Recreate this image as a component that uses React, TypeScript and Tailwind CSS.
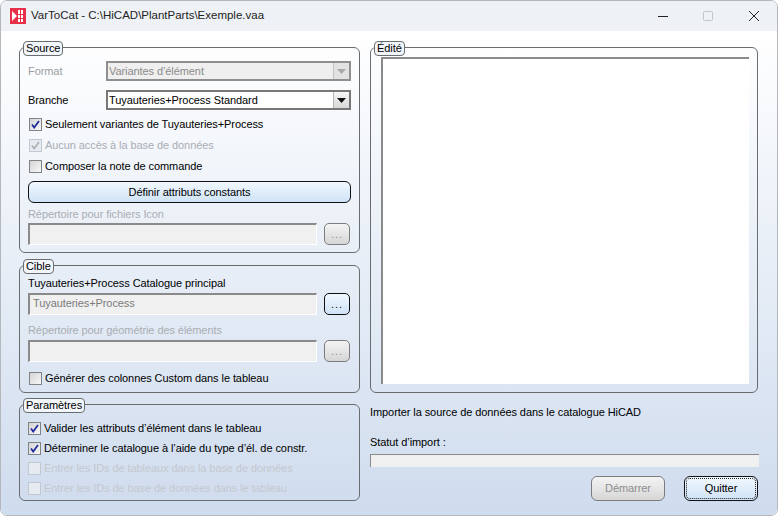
import React from "react";

const F = "font-['Liberation_Sans',sans-serif]";

function Check({ checked, disabled, label, dim }: { checked?: boolean; disabled?: boolean; label: string; dim?: boolean }) {
  return (
    <div className="flex h-[14px] items-center gap-[3px]">
      <span className={`flex h-[13px] w-[13px] shrink-0 items-center justify-center border ${disabled ? "border-[#c2c8d0] bg-[#e6ebf2]" : "border-[#7f8286] bg-gradient-to-br from-[#d4d4d4] to-[#f8f8f8]"}`}>
        {checked && (
          <svg width="9" height="9" viewBox="0 0 9 9" fill="none">
            <path d="M1 4.5 L3.2 7.6 L8 1" stroke={disabled ? "#b0b0b0" : "#1c2a9c"} strokeWidth="1.7" />
          </svg>
        )}
      </span>
      <span className={`whitespace-nowrap text-[11px] leading-[14px] ${disabled ? (dim ? "text-[#c4c8ce]" : "text-[#a9adb3]") : "text-[#000]"}`}>{label}</span>
    </div>
  );
}

function Field({ text }: { text?: string }) {
  return (
    <div className="h-[22px] w-[289px] border-t-2 border-l-2 border-r border-b border-t-[#8a8a8a] border-l-[#8a8a8a] border-r-white border-b-white bg-[#f0f0f0] pl-[3px] text-[11px] leading-[17px] text-[#7b7b7b]">
      {text}
    </div>
  );
}

function Dots({ active }: { active?: boolean }) {
  return (
    <div className={`flex h-[22px] w-[26px] items-center justify-center rounded-[5px] border text-[11px] leading-[18px] tracking-[1px] ${active ? "border-[#111] bg-gradient-to-b from-[#f2f8fe] to-[#cfe3f7] text-[#111]" : "border-[#7c7c7c] bg-gradient-to-b from-[#f4f4f4] to-[#d6d6d6] text-[#8e8e8e]"}`}>
      ...
    </div>
  );
}

function Combo({ text, disabled }: { text: string; disabled?: boolean }) {
  return (
    <div className={`flex h-[20px] w-[245px] items-center justify-between border-2 pl-[1px] text-[11px] ${disabled ? "border-[#8f8f8f] bg-[#efefef] text-[#8b8b8b]" : "border-[#777] bg-white text-[#000]"}`}>
      <span className="whitespace-nowrap">{text}</span>
      <span className={`flex h-[16px] w-[16px] items-center justify-center border-l ${disabled ? "border-[#c5c5c5] bg-[#e2e2e2]" : "border-[#b5b5b5] bg-gradient-to-b from-[#f7f7f7] to-[#d8d8d8]"}`}>
        <svg width="9" height="5" viewBox="0 0 9 5"><path d="M0 0H9L4.5 5Z" fill={disabled ? "#a8a8a8" : "#111"} /></svg>
      </span>
    </div>
  );
}

function Group({ title, className, children }: { title: string; className: string; children: React.ReactNode }) {
  return (
    <section className={`relative rounded-[6px] border border-[#6a6d70] ${className}`}>
      <span className="absolute -top-[7px] left-[3px] h-[15px] rounded-[4px] border border-[#6a6d70] bg-[#f2f6fb] px-[2px] text-[11px] leading-[13px] text-[#000]">{title}</span>
      {children}
    </section>
  );
}

export default function App() {
  return (
    <div className={`${F} h-[516px] w-[778px] overflow-hidden bg-white`}>
      <div className="flex h-[516px] flex-col overflow-hidden rounded-[7px] border border-[#b4b8bd]">
        <header className="flex h-[30px] shrink-0 items-center bg-[#eef2f6]">
          <svg className="ml-[9px]" width="16" height="16" viewBox="0 0 16 16">
            <rect width="16" height="16" fill="#e8304a" />
            <path d="M2 3 L7 8 L2 13Z" fill="#fff" />
            <rect x="8" y="2" width="2" height="12" fill="#fff" />
            <rect x="11" y="2" width="2" height="12" fill="#fff" />
            <rect x="8" y="6" width="5" height="1" fill="#e8304a" />
            <rect x="8" y="10" width="5" height="1" fill="#e8304a" />
          </svg>
          <span className="ml-[5px] text-[11.5px] text-[#222]">VarToCat - C:\HiCAD\PlantParts\Exemple.vaa</span>
          <div className="ml-auto flex items-center">
            <svg width="12" height="12" viewBox="0 0 12 12" className="mr-[33px]"><path d="M1 6.5H11" stroke="#222" /></svg>
            <svg width="12" height="12" viewBox="0 0 12 12" className="mr-[34px]"><rect x="1.5" y="1.5" width="9" height="9" rx="1" fill="none" stroke="#c2c6ca" /></svg>
            <svg width="12" height="12" viewBox="0 0 12 12" className="mr-[17px]"><path d="M1 1L11 11M11 1L1 11" stroke="#222" /></svg>
          </div>
        </header>
        <main className="flex flex-1 gap-[10px] bg-gradient-to-b from-white to-[#cfdcee] pl-[18px] pr-[18px] pt-[16px] tracking-[-0.08px]">
          <div className="flex w-[341px] shrink-0 flex-col">
            <Group title="Source" className="h-[206px]">
              <div className="flex flex-col pl-[8px] pt-[13px]">
                <div className="flex items-center">
                  <span className="w-[78px] text-[11px] text-[#9a9ea4]">Format</span>
                  <Combo text="Variantes d’élément" disabled />
                </div>
                <div className="mt-[9px] flex items-center">
                  <span className="w-[78px] text-[11px] text-[#000]">Branche</span>
                  <Combo text="Tuyauteries+Process Standard" />
                </div>
                <div className="ml-[1px] mt-[7px] flex flex-col gap-[7px]">
                  <Check checked label="Seulement variantes de Tuyauteries+Process" />
                  <Check checked disabled label="Aucun accès à la base de données" />
                  <Check label="Composer la note de commande" />
                </div>
                <div className="mt-[8px] flex h-[22px] w-[323px] items-center justify-center rounded-[6px] border border-[#111] bg-gradient-to-b from-[#f2f8fe] to-[#cfe3f7] text-[11px] text-[#000]">Définir attributs constants</div>
                <div className="mt-[4px] h-[15px] text-[11px] leading-[15px] text-[#a9adb3]">Répertoire pour fichiers Icon</div>
                <div className="mt-[1px] flex gap-[7px]"><Field /><Dots /></div>
              </div>
            </Group>
            <Group title="Cible" className="mt-[12px] h-[128px]">
              <div className="flex flex-col pl-[8px] pt-[10px]">
                <div className="h-[15px] text-[11px] leading-[15px] text-[#000]">Tuyauteries+Process Catalogue principal</div>
                <div className="mt-[2px] flex gap-[7px]"><Field text="Tuyauteries+Process" /><Dots active /></div>
                <div className="mt-[8px] h-[15px] text-[11px] leading-[15px] text-[#a9adb3]">Répertoire pour géométrie des éléments</div>
                <div className="mt-[2px] flex gap-[7px]"><Field /><Dots /></div>
                <div className="ml-[1px] mt-[9px]"><Check label="Générer des colonnes Custom dans le tableau" /></div>
              </div>
            </Group>
            <Group title="Paramètres" className="mt-[11px] h-[97px]">
              <div className="flex flex-col gap-[6px] pl-[8px] pt-[16px]">
                <Check checked label="Valider les attributs d’élément dans le tableau" />
                <Check checked label="Déterminer le catalogue à l’aide du type d’él. de constr." />
                <Check disabled dim label="Entrer les IDs de tableaux dans la base de données" />
                <Check disabled dim label="Entrer les IDs de base de données dans le tableau" />
              </div>
            </Group>
          </div>
          <div className="flex w-[389px] shrink-0 flex-col">
            <Group title="Édité" className="h-[346px] w-[388px]">
              <div className="ml-[10px] mt-[9px] h-[327px] w-[368px] border-t-2 border-l-2 border-[#8a8a8a] bg-white" />
            </Group>
            <div className="mt-[12px] text-[11px] leading-[14px] text-[#000]">Importer la source de données dans le catalogue HiCAD</div>
            <div className="mt-[16px] text-[11px] leading-[14px] text-[#000]">Statut d’import :</div>
            <div className="mt-[5px] h-[13px] w-[389px] border-t border-l border-[#8a8a8a] bg-[#f0f0f0]" />
            <div className="mt-[9px] flex justify-end gap-[19px] pr-[1px]">
              <div className="flex h-[25px] w-[74px] items-center justify-center rounded-[6px] border border-[#7c7c7c] bg-gradient-to-b from-[#f4f4f4] to-[#d6d6d6] text-[11px] text-[#8e8e8e]">Démarrer</div>
              <div className="flex h-[25px] w-[74px] items-center justify-center rounded-[6px] border border-[#111] bg-gradient-to-b from-[#f2f8fe] to-[#cfe3f7] text-[11px] text-[#000] outline-1 -outline-offset-3 outline-dotted outline-[#222]">Quitter</div>
            </div>
          </div>
        </main>
      </div>
    </div>
  );
}
